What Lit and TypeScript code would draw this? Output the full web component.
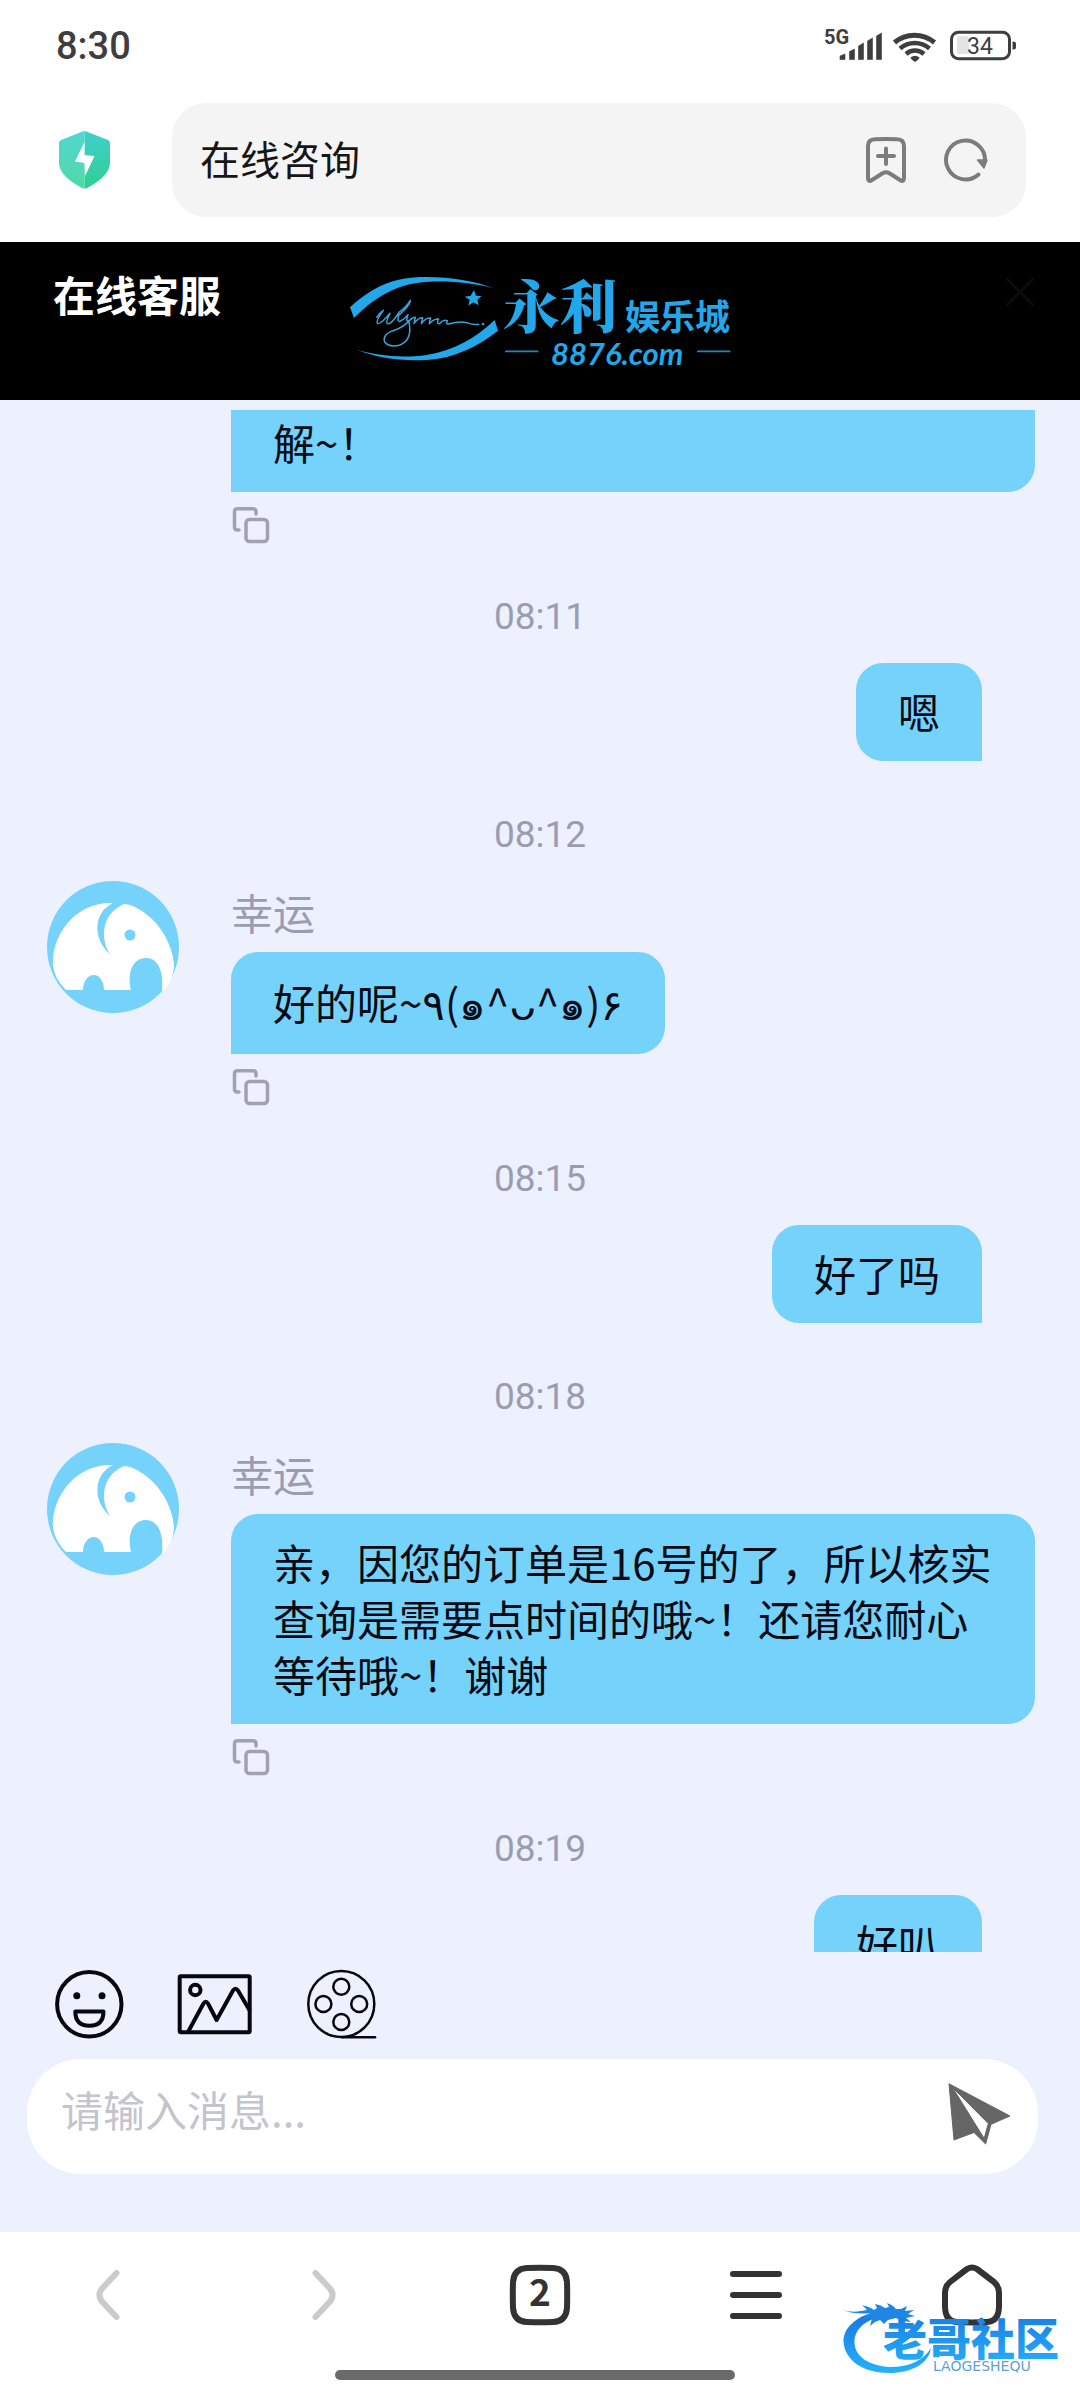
import { LitElement, html, css, svg, nothing } from "lit";
import { customElement, property } from "lit/decorators.js";

type Entry =
  | { kind: "time"; text: string }
  | { kind: "user"; text: string }
  | { kind: "agent"; text: string; name?: string; continued?: boolean; emoticon?: boolean };

const conversation: Entry[] = [
  { kind: "agent", text: "解~！", continued: true },
  { kind: "time", text: "08:11" },
  { kind: "user", text: "嗯" },
  { kind: "time", text: "08:12" },
  { kind: "agent", name: "幸运", text: "好的呢~٩(๑^ᴗ^๑)۶", emoticon: true },
  { kind: "time", text: "08:15" },
  { kind: "user", text: "好了吗" },
  { kind: "time", text: "08:18" },
  {
    kind: "agent",
    name: "幸运",
    text: "亲，因您的订单是16号的了，所以核实查询是需要点时间的哦~！还请您耐心等待哦~！谢谢",
  },
  { kind: "time", text: "08:19" },
  { kind: "user", text: "好叭" },
];

const controls = css`
  *,
  *::before,
  *::after {
    box-sizing: border-box;
  }
  svg {
    display: block;
    flex: none;
    overflow: visible;
  }
  button {
    appearance: none;
    border: 0;
    padding: 0;
    margin: 0;
    background: none;
    color: inherit;
    font: inherit;
    cursor: pointer;
  }
  input {
    appearance: none;
    border: 0;
    outline: 0;
    padding: 0;
    margin: 0;
    min-width: 0;
    background: none;
    font: inherit;
  }
`;

/** System status strip and the browser's address bar. */
@customElement("browser-top")
export class BrowserTop extends LitElement {
  static styles = [
    controls,
    css`
      :host {
        display: block;
        background: #fff;
      }
      .status {
        display: flex;
        align-items: center;
        justify-content: space-between;
        height: 92px;
        padding: 0 62px 0 56px;
        color: #3e3e3e;
      }
      .clock {
        font: 500 38px/48px Roboto, sans-serif;
      }
      .row {
        display: flex;
        align-items: center;
        gap: 62px;
        padding: 11px 54px 25px 59px;
      }
      .bar {
        flex: 1;
        min-width: 0;
        display: flex;
        align-items: center;
        gap: 38px;
        height: 114px;
        padding: 0 38px 0 28px;
        border-radius: 34px;
        background: #f4f4f4;
        color: #7c7c7c;
      }
      .address {
        flex: 1;
        padding-bottom: 4px;
        color: #161616;
        font-size: 40px;
        line-height: 56px;
      }
    `,
  ];

  render() {
    return html`
      <div class="status">
        <span class="clock">8:30</span>
        <svg width="194" height="40" viewBox="824 26 194 40" fill="currentColor" role="img" aria-label="5G 34%">
          <text x="824" y="44" font-family="Roboto, sans-serif" font-weight="700" font-size="20">5G</text>
          <path d="M840 56l5-2v5.500h-5zM849.500 51.500l5-2.500v10.500h-5zM858.500 46l5-3v16.500h-5zM867.500 41l5-3v21.500h-5zM876.500 36l5-3v26.500h-5z" stroke="currentColor" stroke-width=".6" stroke-linejoin="round" />
          <g fill="none" stroke="currentColor" stroke-width="5">
            <path d="M894.500 42.500a31 31 0 0 1 40 0" />
            <path d="M900 48.500a22.500 22.500 0 0 1 29.500 0" stroke-width="4.500" />
            <path d="M906 54a13.500 13.500 0 0 1 18 0" stroke-width="4.500" />
          </g>
          <path d="M910.500 57.500q4.500-3.500 9 0q-.5 2-4.500 4.500q-4-2.500-4.500-4.500z" />
          <rect x="951.500" y="32.200" width="58" height="26.500" rx="7" fill="none" stroke="currentColor" stroke-width="3" />
          <rect x="957" y="36" width="12" height="18" rx="2" fill="#e4e4e4" />
          <path d="M1012.500 41.500q3.500 0 3.500 2v4q0 2-3.500 2z" />
          <text x="967" y="54" font-family="Roboto, sans-serif" font-size="23">34</text>
        </svg>
      </div>
      <div class="row">
        <svg width="51" height="58" viewBox="0 0 51 58" role="img" aria-label="安全">
          <defs>
            <linearGradient id="left" x1="0" y1="0" x2="0" y2="1">
              <stop offset="0" stop-color="#53d6d0" />
              <stop offset="1" stop-color="#50d9a8" />
            </linearGradient>
            <linearGradient id="right" x1="0" y1="0" x2="0" y2="1">
              <stop offset="0" stop-color="#3fd0cc" />
              <stop offset="1" stop-color="#2fcf92" />
            </linearGradient>
          </defs>
          <path d="M25.500 0Q23.500 0 21 1.500L2 9Q0 10 0 12v20Q0 44 21 56q2.500 1.500 4.500 1.500z" fill="url(#left)" />
          <path d="M25.500 0Q27.500 0 30 1.500L49 9Q51 10 51 12v20Q51 44 30 56q-2.500 1.500-4.500 1.500z" fill="url(#right)" />
          <path d="M25.500 11L16 30.500L25.500 32L26 45L35.500 25L25.500 24z" fill="#fff" />
        </svg>
        <div class="bar">
          <input class="address" aria-label="地址" .value=${"在线咨询"} />
          <button aria-label="添加书签">
            <svg width="40" height="46" viewBox="0 0 40 46" fill="none" stroke="currentColor" stroke-width="4" stroke-linecap="round" stroke-linejoin="round">
              <path d="M2 9Q2 2.500 9 2.300Q20 1.600 31 2.300Q38 2.500 38 9V41Q38 45.500 34 43L23 36Q20 34.500 17 36L6 43Q2 45.500 2 41z" />
              <path d="M20 11.500V27M12 19H28" />
            </svg>
          </button>
          <button aria-label="刷新">
            <svg width="44" height="44" viewBox="0 0 44 44" fill="none" stroke="currentColor" stroke-width="4" stroke-linecap="round">
              <path d="M41 23A19.500 19.500 0 1 0 34.500 36.500" />
              <path d="M33.500 22H43l-3 8z" fill="currentColor" stroke-width="1.500" stroke-linejoin="round" />
            </svg>
          </button>
        </div>
      </div>
    `;
  }
}

/** Black title bar with the site logo. */
@customElement("service-header")
export class ServiceHeader extends LitElement {
  static styles = [
    controls,
    css`
      :host {
        display: block;
        background: #000;
      }
      .header {
        display: grid;
        grid-template-columns: 1fr auto 1fr;
        align-items: start;
        min-height: 158px;
        padding: 20px 40px 22px 53px;
      }
      .title {
        margin: 0;
        padding-top: 8px;
        color: #fff;
        font-size: 42px;
        line-height: 48px;
        font-weight: 700;
      }
      .logo {
        margin-left: -13px;
      }
      .close {
        justify-self: end;
        padding-top: 10px;
        color: #0b0b0b;
      }
    `,
  ];

  render() {
    return html`
      <header class="header">
        <h1 class="title">在线客服</h1>
        <svg class="logo" width="390" height="116" viewBox="345 262 390 116" fill="#22a7ea" role="img" aria-label="永利娱乐城 8876.com">
          <g transform="translate(330 260) scale(.33333)">
            <path d="M60 142C130 78 195 50 290 51C370 52 430 62 490 84C430 70 370 62 300 65C210 68 140 105 72 174z" />
            <path d="M75 268C140 288 215 295 290 285C370 273 440 232 494 180L504 212C440 262 370 295 290 300C210 304 140 294 75 268z" />
            <path d="M432 90L438 107L455 108L442 119L446 136L430 127L415 137L419 119L404 110L422 107z" />
            <g fill="none" stroke="#3ba3d8" stroke-width="4.500" stroke-linecap="round" stroke-linejoin="round">
              <path d="M140 172Q150 158 160 151Q136 184 142 190Q150 196 180 160Q166 186 172 191Q182 196 208 156Q230 140 241 121Q242 134 206 166Q200 186 210 184Q226 176 234 164Q226 186 236 182Q250 240 208 256Q176 262 164 246Q156 224 190 212Q222 202 242 178" />
              <path d="M242 178Q250 172 256 172L252 190Q266 172 278 173Q276 184 274 191Q288 172 302 174Q298 184 298 191Q312 176 326 177Q318 192 328 191Q340 178 352 182Q346 194 356 192Q390 182 410 188Q430 196 446 193" />
            </g>
            <circle cx="459" cy="192" r="4" />
          </g>
          <text x="503" y="328" font-family="'Noto Serif CJK SC', 'Noto Sans CJK SC', sans-serif" font-weight="900" font-size="57">永利</text>
          <text x="625" y="330" font-family="'Noto Sans CJK SC', sans-serif" font-weight="700" font-size="35">娱乐城</text>
          <text x="551" y="365" font-family="Lato, sans-serif" font-weight="700" font-style="italic" font-size="31">8876.com</text>
          <path d="M505 350.500h33.500v1.800h-33.500zM697 350.500h33.500v1.800h-33.500z" opacity=".8" />
        </svg>
        <button class="close" aria-label="关闭">
          <svg width="40" height="40" viewBox="0 0 40 40" fill="none" stroke="currentColor" stroke-width="3">
            <path d="M6 6L34 34M34 6L6 34" />
          </svg>
        </button>
      </header>
    `;
  }
}

/** One message bubble, from the agent (left) or the visitor (right). */
@customElement("chat-message")
export class ChatMessage extends LitElement {
  @property() side: "agent" | "user" = "agent";
  @property() name = "";
  @property() text = "";
  @property({ type: Boolean }) continued = false;
  @property({ type: Boolean }) emoticon = false;

  static styles = [
    controls,
    css`
      :host {
        display: block;
      }
      .message {
        display: grid;
        grid-template-columns: 132px minmax(0, 1fr);
        column-gap: 52px;
        padding: 0 45px 0 47px;
      }
      .content {
        grid-column: 2;
        display: flex;
        flex-direction: column;
        align-items: flex-start;
      }
      .avatar {
        grid-column: 1;
      }
      .name {
        margin-bottom: 9px;
        color: #9a9db2;
        line-height: 62px;
      }
      .bubble {
        margin: 0;
        padding: 20px 42px 22px;
        border-radius: 27px;
        background: #75d2fb;
        color: #050a14;
        line-height: 56px;
      }
      .agent .bubble {
        border-bottom-left-radius: 0;
      }
      .emoticon .bubble {
        line-height: 60px;
      }
      .continued .bubble {
        align-self: stretch;
        padding-top: 4px;
        border-top-left-radius: 0;
        border-top-right-radius: 0;
      }
      .copy {
        margin-top: 15px;
        color: #a0a3ae;
      }
      .user {
        display: flex;
        justify-content: flex-end;
        padding: 0 98px 0 47px;
      }
      .user .bubble {
        border-bottom-right-radius: 0;
      }
    `,
  ];

  private avatar() {
    return svg`
      <svg class="avatar" width="132" height="132" viewBox="0 0 132 132" role="img" aria-label="客服头像">
        <circle cx="66" cy="66" r="66" fill="#75d2fb" />
        <path fill="#fff" d="M19 109C9 99 5 88 6 77C9 47 32 23 61 22H66C52 29 49 42 51 53C52 60 57 68 63 73C53 58 54 33 77 23C80 23 84 24 88 26C112 38 125 62 127 83C127 94 123 103 115 111C117 90 111 77 99 77C85 77 80 93 84 109H57C57 100 52 94 47 94C41 94 36 100 36 109z" />
        <circle cx="83" cy="54" r="5.500" fill="#75d2fb" />
      </svg>`;
  }

  render() {
    if (this.side === "user") {
      return html`<div class="user"><p class="bubble">${this.text}</p></div>`;
    }
    const variant = this.continued ? "continued" : this.emoticon ? "emoticon" : "";
    return html`
      <div class="message agent ${variant}">
        ${this.name ? this.avatar() : nothing}
        <div class="content">
          ${this.name ? html`<span class="name">${this.name}</span>` : nothing}
          <p class="bubble">${this.text}</p>
          <button class="copy" aria-label="复制">
            <svg width="38" height="36" viewBox="0 0 38 36" fill="none" stroke="currentColor" stroke-width="3.500" stroke-linecap="round">
              <path d="M8 23H6.500Q3.500 23 3.500 20V4.800Q3.500 1.800 6.500 1.800H22Q25 1.800 25 4.800V7" />
              <rect x="15" y="12.500" width="21.500" height="22" rx="3.500" />
            </svg>
          </button>
        </div>
      </div>
    `;
  }
}

/** Attachment buttons and the message box. */
@customElement("chat-composer")
export class ChatComposer extends LitElement {
  static styles = [
    controls,
    css`
      :host {
        display: block;
        padding: 16px 42px 58px 27px;
      }
      .tools {
        display: flex;
        gap: 51px;
        padding: 0 27px 19px;
        color: #05080f;
      }
      .box {
        display: flex;
        align-items: flex-start;
        height: 115px;
        padding: 0 26px 0 34px;
        border-radius: 54px;
        background: #fff;
      }
      .field {
        flex: 1;
        height: 98px;
        color: #161616;
        font-size: 42px;
      }
      .field::placeholder {
        color: #c4c5cc;
        opacity: 1;
      }
      .send {
        padding-top: 24px;
        color: #666;
      }
    `,
  ];

  render() {
    return html`
      <div class="tools">
        <button aria-label="表情">
          <svg width="70" height="72" viewBox="54 1968 70 72" fill="none" stroke="currentColor" stroke-width="4">
            <circle cx="89.300" cy="2004.300" r="32.200" />
            <circle cx="76.800" cy="1995.700" r="3.500" fill="currentColor" stroke="none" />
            <circle cx="102" cy="1995.700" r="3.500" fill="currentColor" stroke="none" />
            <path d="M75.300 2011.500H103.500Q103.500 2025.700 89.400 2025.700Q75.300 2025.700 75.300 2011.500z" stroke-linejoin="round" />
          </svg>
        </button>
        <button aria-label="图片">
          <svg width="78" height="72" viewBox="175 1968 78 72" fill="none" stroke="currentColor" stroke-width="4" stroke-linejoin="round">
            <rect x="179.700" y="1976.200" width="70" height="56" rx="1" />
            <circle cx="195.300" cy="1990" r="5.200" />
            <path d="M188 2032L203.500 2003.500Q205.700 2000 208 2003.500L216.600 2020L233 1990.500Q235.500 1987 238 1990.500L250 2011" />
          </svg>
        </button>
        <button aria-label="视频">
          <svg width="74" height="72" viewBox="304 1968 74 72" fill="none" stroke="currentColor" stroke-width="2.500">
            <circle cx="341.300" cy="2004" r="33" />
            <circle cx="341.300" cy="1986.700" r="8" />
            <circle cx="323.400" cy="2004" r="8" />
            <circle cx="359.200" cy="2004" r="8" />
            <circle cx="341.300" cy="2022" r="8" />
            <path d="M342 2037.200H375" stroke-linecap="round" />
          </svg>
        </button>
      </div>
      <div class="box">
        <input class="field" type="text" aria-label="消息" placeholder="请输入消息..." />
        <button class="send" aria-label="发送">
          <svg width="64" height="62" viewBox="0 0 64 62">
            <path fill="currentColor" fill-rule="evenodd" stroke="currentColor" stroke-width="1" stroke-linejoin="round" d="M1 .800L62 33L43 41.300L37.600 61L26 49.500L6 57zM4.500 4.500L36.200 55.500L40.300 40.500z" />
          </svg>
        </button>
      </div>
    `;
  }
}

/** Browser toolbar with the gesture bar and the community mark above it. */
@customElement("browser-nav")
export class BrowserNav extends LitElement {
  static styles = [
    controls,
    css`
      :host {
        display: block;
        position: relative;
        background: #fff;
      }
      .items {
        display: grid;
        grid-template-columns: repeat(5, 1fr);
        justify-items: center;
        align-items: center;
        height: 126px;
        color: #333;
      }
      .items .off {
        color: #cbcbcb;
      }
      .gesture {
        width: 400px;
        height: 10px;
        margin: 12px calc(50% - 195px) 20px auto;
        border-radius: 5px;
        background: #6a6a6a;
      }
      .mark {
        position: absolute;
        right: 12px;
        bottom: 20px;
        pointer-events: none;
      }
    `,
  ];

  render() {
    return html`
      <nav class="items">
        <button class="off" aria-label="后退">
          <svg width="24" height="52" viewBox="0 0 24 52" fill="none" stroke="currentColor" stroke-width="6" stroke-linecap="round">
            <path d="M20.500 4L6.500 19Q.500 26 6.500 33L20.500 48" />
          </svg>
        </button>
        <button class="off" aria-label="前进">
          <svg width="24" height="52" viewBox="0 0 24 52" fill="none" stroke="currentColor" stroke-width="6" stroke-linecap="round">
            <path d="M3.500 4L17.500 19Q23.500 26 17.500 33L3.500 48" />
          </svg>
        </button>
        <button aria-label="标签页 2">
          <svg width="60" height="60" viewBox="0 0 60 60">
            <path d="M17 3Q30 2.600 43 3Q56 3.500 57 17Q57.400 30 57 43Q56 56.500 43 57Q30 57.400 17 57Q4 56.500 3 43Q2.600 30 3 17Q4 3.500 17 3z" fill="none" stroke="currentColor" stroke-width="6" />
            <text x="30" y="41" text-anchor="middle" fill="currentColor" font-family="'Noto Sans CJK SC', sans-serif" font-weight="700" font-size="37">2</text>
          </svg>
        </button>
        <button aria-label="菜单">
          <svg width="52" height="50" viewBox="0 0 52 50" fill="none" stroke="currentColor" stroke-width="6" stroke-linecap="round">
            <path d="M3 4H49M3 25H49M3 46H49" />
          </svg>
        </button>
        <button aria-label="主页">
          <svg width="60" height="62" viewBox="0 0 60 62" fill="none" stroke="currentColor" stroke-width="6" stroke-linejoin="round">
            <path d="M25 5Q30 2 35 5L52 18Q57 22 57 29V42Q57 58 44 58Q30 58.800 16 58Q3 58 3 42V29Q3 22 8 18z" />
          </svg>
        </button>
      </nav>
      <div class="gesture"></div>
      <svg class="mark" width="228" height="84" viewBox="840 2296 228 84" role="img" aria-label="老哥社区 LAOGESHEQU">
        <defs>
          <linearGradient id="blue" x1="0" y1="0" x2="0" y2="1">
            <stop offset="0" stop-color="#1677e0" />
            <stop offset="1" stop-color="#25b2fb" />
          </linearGradient>
        </defs>
        <path fill="url(#blue)" d="M874 2312C856 2317 843 2328 843.500 2342C845 2361 864 2373 889 2373C912 2373 929 2363 931 2348C924 2360 910 2367 890 2367C870 2366 855 2357 854.500 2343C854 2331 863 2321 880 2317z" />
        <path fill="#2086e4" d="M842.500 2310Q852 2313 861 2311L867 2310Q865 2307 862 2305.500Q869 2306 874 2310L877 2308L875 2304Q881 2305 885 2308L889 2307L887 2303Q893 2305 896 2309L901 2309L907 2306L905 2311L914 2310L908 2314L915 2316L906 2318L911 2322L902 2321L896 2318L888 2320L884 2324L880 2320L875 2322L870 2326L872 2318Q867 2318 863 2320Q866 2315 871 2313Q856 2315 842.500 2310z" />
        <text x="883" y="2356" fill="url(#blue)" font-family="'Noto Sans CJK SC', sans-serif" font-weight="900" font-size="44">老哥社区</text>
        <text x="933" y="2371" fill="#5f9fd6" font-family="'DejaVu Sans', sans-serif" font-size="14">LAOGESHEQU</text>
      </svg>
    `;
  }
}

@customElement("app-root")
export class AppRoot extends LitElement {
  static styles = css`
    :host {
      display: flex;
      flex-direction: column;
      height: 100vh;
      background: #edf1fd;
      font-family: "Noto Sans CJK SC", "Noto Sans", "DejaVu Sans", sans-serif;
      font-size: 42px;
    }
    .log {
      flex: 1;
      min-height: 0;
      margin-top: 10px;
      overflow: hidden;
    }
    .time {
      display: block;
      margin: 46px 0 18px;
      color: #9a9db2;
      font: 400 37px/56px Roboto, sans-serif;
      text-align: center;
    }
  `;

  private entry(item: Entry) {
    switch (item.kind) {
      case "time":
        return html`<time class="time">${item.text}</time>`;
      case "user":
        return html`<chat-message side="user" .text=${item.text}></chat-message>`;
      case "agent":
        return html`<chat-message
          side="agent"
          .name=${item.name ?? ""}
          .text=${item.text}
          ?continued=${item.continued ?? false}
          ?emoticon=${item.emoticon ?? false}
        ></chat-message>`;
    }
  }

  render() {
    return html`
      <browser-top></browser-top>
      <service-header></service-header>
      <main class="log">${conversation.map((item) => this.entry(item))}</main>
      <chat-composer></chat-composer>
      <browser-nav></browser-nav>
    `;
  }
}
